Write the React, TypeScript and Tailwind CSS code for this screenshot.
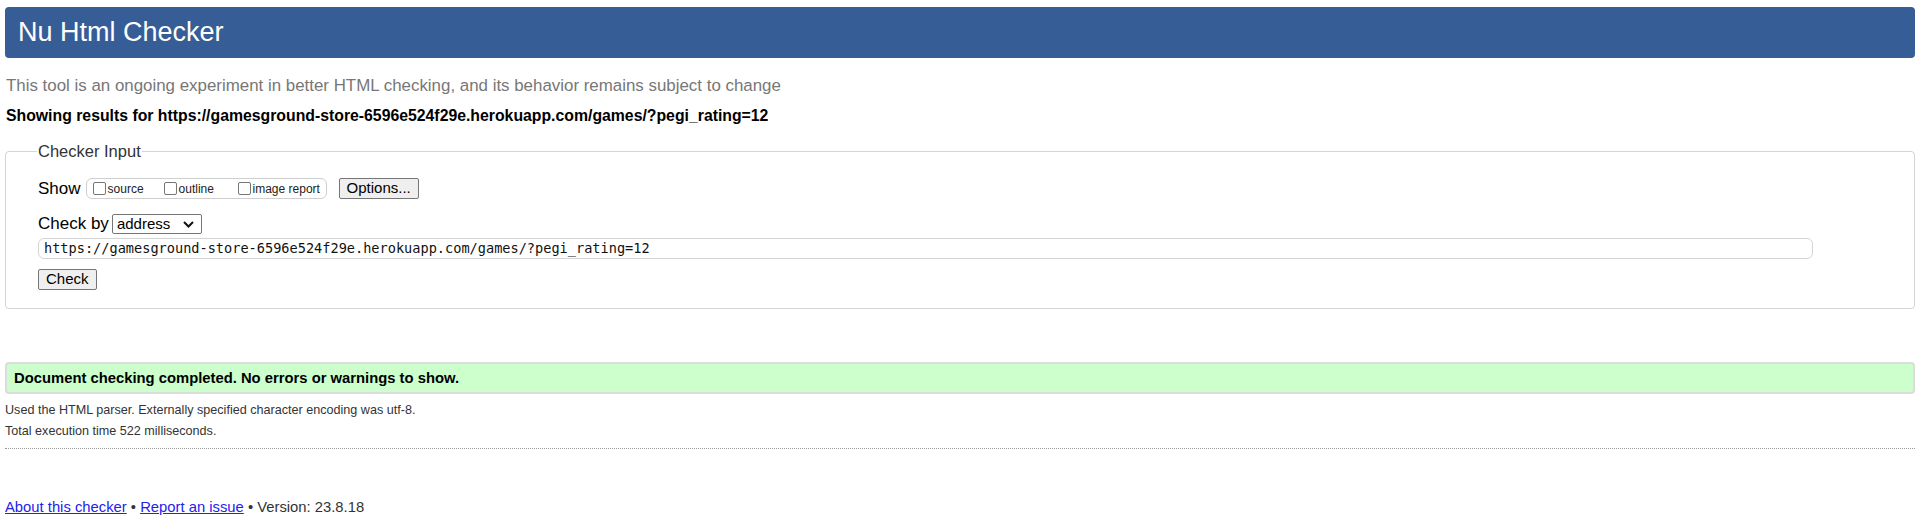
import React from 'react';

// --- Nu Html Checker result page ---

const url = 'https://gamesground-store-6596e524f29e.herokuapp.com/games/?pegi_rating=12';

function ShowOption({ label, className }: { label: string; className?: string }) {
    return (
        <label className={`flex items-center whitespace-nowrap ${className ?? ''}`}>
            <input type="checkbox" className="m-0 mr-[2px] h-[13px] w-[13px] appearance-none rounded-[2px] border border-[#767676] bg-white" />
            <span className="text-[12px] text-[#222]">{label}</span>
        </label>
    );
}

function SysButton({ children }: { children: React.ReactNode }) {
    return (
        <button className="flex h-[21px] items-center rounded-[2px] border border-[#767676] bg-[#efefef] px-[7px] text-[15px] text-black">
            {children}
        </button>
    );
}

export default function App() {
    return (
        <div className="min-h-[523px] bg-white font-['Liberation_Sans',Arial,sans-serif] text-black">
            {/* titre */}
            <header className="mx-[5px] pt-[7px]">
                <div className="flex h-[51px] items-center rounded-[4px] bg-[#365d95] pl-[13px]">
                    <h1 className="text-[27px] font-normal leading-none text-white">Nu Html Checker</h1>
                </div>
            </header>

            <p className="ml-[6px] mt-[19px] text-[16.9px] leading-[18px] text-[#777]">
                This tool is an ongoing experiment in better HTML checking, and its behavior remains subject to change
            </p>
            <p className="ml-[6px] mt-[12px] text-[15.8px] font-bold leading-[18px]">
                Showing results for {url}
            </p>

            {/* Checker Input */}
            <fieldset className="mx-[5px] mt-[14px] h-[170px] rounded-[4px] border border-[#d4d4d4] px-[32px] pt-[12px]">
                <legend className="-ml-[1px] px-[1px] text-[16.5px] text-[#333]">Checker Input</legend>

                <div className="flex items-center">
                    <span className="text-[17px]">Show</span>
                    <div className="ml-[5px] flex h-[21px] w-[241px] items-center rounded-[6px] border border-[#cfcfcf] pl-[6px]">
                        <ShowOption label="source" className="w-[71px]" />
                        <ShowOption label="outline" className="w-[74px]" />
                        <ShowOption label="image report" />
                    </div>
                    <div className="ml-[12px]">
                        <SysButton>Options...</SysButton>
                    </div>
                </div>

                <div className="mt-[10px] flex items-center gap-[3px]">
                    <span className="text-[17px]">Check by</span>
                    <div className="relative flex h-[20px] w-[90px] items-center rounded-[2px] border border-[#767676] bg-white pl-[4px] text-[15px]">
                        address
                        <svg className="absolute right-[7px] top-[6px]" width="11" height="7" viewBox="0 0 11 7">
                            <path d="M1 1 L5.5 5.5 L10 1" fill="none" stroke="#111" strokeWidth="2" />
                        </svg>
                    </div>
                </div>

                <div className="mt-[1px] flex h-[21px] w-[1775px] items-center rounded-[6px] border border-[#d4d4d4] pl-[5px] font-['DejaVu_Sans_Mono',monospace] text-[13.6px] text-[#111]">
                    {url}
                </div>

                <div className="mt-[10px]">
                    <SysButton>Check</SysButton>
                </div>
            </fieldset>

            {/* résultat */}
            <div className="mx-[5px] mt-[53px] flex h-[32px] items-center rounded-[4px] border-2 border-[#dcdcdc] bg-[#ccffcc] pl-[7px]">
                <p className="text-[14.8px] font-bold">Document checking completed. No errors or warnings to show.</p>
            </div>
            <p className="ml-[5px] mt-[9px] text-[12.6px] leading-[14px] text-[#333]">
                Used the HTML parser. Externally specified character encoding was utf-8.
            </p>
            <p className="ml-[5px] mt-[7px] text-[12.6px] leading-[14px] text-[#333]">Total execution time 522 milliseconds.</p>
            <hr className="mx-[5px] mt-[10px] border-t border-dotted border-[#999]" />

            <footer className="ml-[5px] mt-[47px] text-[14.8px] text-[#333]">
                <a href="#" className="text-[#2222ee] underline">About this checker</a>
                {' • '}
                <a href="#" className="text-[#2222ee] underline">Report an issue</a>
                {' • Version: 23.8.18'}
            </footer>
        </div>
    );
}
